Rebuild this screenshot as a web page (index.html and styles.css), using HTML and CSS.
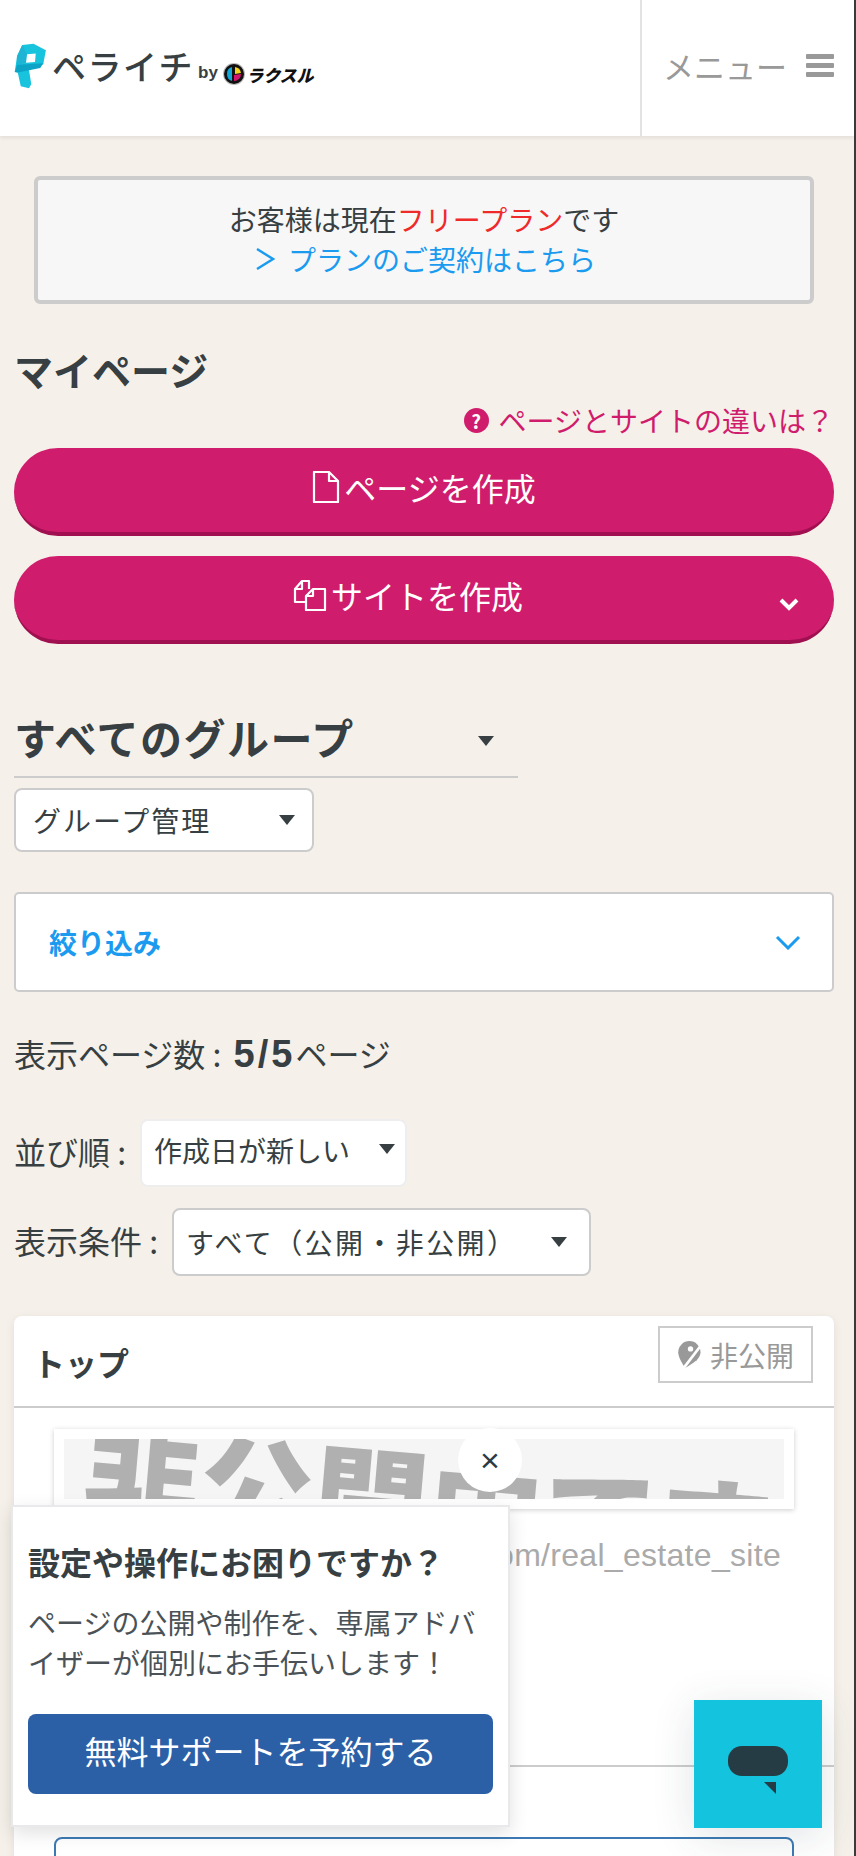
FILE: index.html
```
<!DOCTYPE html>
<html lang="ja">
<head>
    <meta charset="utf-8">
    <title>マイページ</title>
    <link rel="stylesheet" href="styles.css">
</head>
<body>
<header class="site-header">
    <div class="logo">
        <svg class="logo-mark" viewBox="20 10 88 140" width="33" height="46" preserveAspectRatio="none">
            <path fill="#17c3dd" d="M42 16 72 12l33 20-7 43-38 17 6 43-6 13-22-6-8-42-8-2 6-48z"/>
            <path fill="#0da3c6" d="M22 98 28 76l70-4-8 14-60 14z"/>
            <path fill="#20b4d4" d="M42 16l13 28-3 26-24 6 0-26z"/>
            <path fill="#fff" d="M55 44l23-2-2 26-24 2z"/>
        </svg>
        <span class="logo-name">ペライチ</span>
        <span class="logo-by">by</span>
        <svg class="logo-badge" viewBox="0 0 22 22" width="22" height="22">
            <circle cx="11" cy="11" r="11" fill="#bbb"/>
            <circle cx="11" cy="11" r="10" fill="#111"/>
            <path fill="#11a5d8" d="M4 11a7 7 0 0 1 5-7v14a7 7 0 0 1-5-7z"/>
            <path fill="#f2d21c" d="M12 4a7 7 0 0 1 6 6l-6 1z"/>
            <path fill="#d3156f" d="M11 12l7-1a7 7 0 0 1-7 7z"/>
        </svg>
        <span class="logo-rakusul">ラクスル</span>
    </div>
    <div class="menu-btn">
        <span>メニュー</span>
        <span class="burger"><i></i><i></i><i></i></span>
    </div>
</header>

<main class="page">
    <div class="plan-notice">
        <div>お客様は現在<span class="red">フリープラン</span>です</div>
        <div class="plan-link"><svg class="plan-arrow" viewBox="0 0 20 22" width="20" height="22"><path d="M2 1l16 10L2 21" fill="none" stroke="#1b9bf0" stroke-width="2.4"/></svg>プランのご契約はこちら</div>
    </div>

    <h1 class="page-title">マイページ</h1>
    <div class="help-row">
        <span class="help-icon">?</span>
        <span>ページとサイトの違いは？</span>
    </div>

    <div class="create-btn">
        <svg viewBox="0 0 28 32" width="28" height="32"><path d="M2 1h15l9 9v21H2zM17 1v9h9" fill="none" stroke="#fff" stroke-width="2.2" stroke-linejoin="round"/></svg>
        <span>ページを作成</span>
    </div>
    <div class="create-btn create-site">
        <svg viewBox="0 0 34 32" width="34" height="32"><path d="M12 23H2V10l7-8h7v8M9 2v8H2" fill="none" stroke="#fff" stroke-width="2.2" stroke-linejoin="round"/><path d="M13 31V17l7-7h12v21zM20 10v7h-7" fill="none" stroke="#fff" stroke-width="2.2" stroke-linejoin="round"/></svg>
        <span>サイトを作成</span>
        <svg class="create-chev" viewBox="0 0 20 13" width="20" height="13"><path d="M2 2l8 8 8-8" fill="none" stroke="#fff" stroke-width="4"/></svg>
    </div>

    <div class="group-select">
        <span>すべてのグループ</span>
        <i class="caret"></i>
    </div>
    <div class="select-box group-manage">
        <span>グループ管理</span>
        <i class="caret"></i>
    </div>

    <div class="filter-box">
        <span>絞り込み</span>
        <svg viewBox="0 0 26 15" width="26" height="15"><path d="M2 2l11 11L24 2" fill="none" stroke="#1b9bf0" stroke-width="3"/></svg>
    </div>

    <p class="page-count">表示ページ数 : <b>5/5</b>ページ</p>

    <div class="sort-row">
        <span class="sort-label">並び順 :</span>
        <div class="select-box sort-select">
            <span>作成日が新しい</span>
            <i class="caret"></i>
        </div>
    </div>
    <div class="sort-row cond-row">
        <span class="sort-label">表示条件 :</span>
        <div class="select-box cond-select">
            <span>すべて（公開・非公開）</span>
            <i class="caret"></i>
        </div>
    </div>

    <section class="page-card">
        <div class="card-head">
            <h2>トップ</h2>
            <div class="status-tag">
                <svg viewBox="0 0 24 26" width="27" height="29">
                    <path fill="#999" d="M11 1a10 10 0 0 1 10 10c0 5-6 10-14 14C4 20 1 15 1 11A10 10 0 0 1 11 1z"/>
                    <path d="M6 25 22 4" stroke="#fff" stroke-width="2.4"/>
                    <path d="M15 17l4-5 1 2-3 5z" fill="#999"/>
                    <circle cx="12" cy="8" r="2.4" fill="#fff"/>
                </svg>
                <span>非公開</span>
            </div>
        </div>
        <div class="card-body">
            <div class="thumb">
                <div class="thumb-inner"><span>非公開中です</span></div>
            </div>
            <div class="page-url">https://r-style.peraichi.com/real_estate_site</div>
        </div>
        <div class="card-foot">
            <div class="foot-btn"></div>
        </div>
    </section>
</main>

<div class="popup-close">×</div>
<aside class="support-popup">
    <h3>設定や操作にお困りですか？</h3>
    <p>ページの公開や制作を、専属アドバイザーが個別にお手伝いします！</p>
    <div class="support-btn">無料サポートを予約する</div>
</aside>

<div class="chat-btn">
    <svg viewBox="0 0 60 48" width="60" height="48">
        <rect width="60" height="30" rx="14" fill="#263c44"/>
        <path d="M36 36h12v12z" fill="#263c44"/>
    </svg>
</div>
</body>
</html>
```

FILE: styles.css
```
* {
    box-sizing: border-box;
}

html {
    height: 1856px;
    overflow: hidden;
    background-color: #3a3a3a;
}

body {
    margin: 0;
    width: 854px;
    height: 1856px;
    overflow: hidden;
    background-color: #f5f1ea;
    color: #373f42;
    font-family: "Noto Sans CJK JP", "Liberation Sans", sans-serif;
    font-size: 28px;
    text-spacing-trim: space-all;
    position: relative;
}

.site-header {
    height: 136px;
    background-color: #fff;
    display: flex;
    justify-content: space-between;
    box-shadow: 0 2px 4px rgba(0, 0, 0, 0.08);
}

.logo {
    display: flex;
    align-items: center;
    padding-left: 14px;
}

.logo-mark {
    margin-top: -4px;
}

.logo-name {
    font-size: 34px;
    font-weight: 500;
    margin-left: 5px;
    margin-top: -4px;
    letter-spacing: 1.5px;
    line-height: 1;
}

.logo-by {
    font-family: "Liberation Sans", sans-serif;
    font-weight: bold;
    font-size: 17px;
    margin-left: 4px;
    margin-top: 10px;
}

.logo-badge {
    margin-left: 5px;
    margin-top: 12px;
}

.logo-rakusul {
    font-weight: 900;
    font-size: 17px;
    color: #111;
    margin-left: 3px;
    margin-top: 12px;
    line-height: 1;
    transform: skewX(-14deg);
}

.menu-btn {
    width: 214px;
    border-left: 2px solid #e3e3e3;
    display: flex;
    align-items: center;
    padding-left: 21px;
    color: #999;
    font-size: 31px;
}

.menu-btn > span:first-child {
    margin-top: -6px;
}

.burger {
    display: flex;
    flex-direction: column;
    gap: 4px;
    margin-left: 19px;
    margin-top: -6px;
}

.burger i {
    display: block;
    width: 28px;
    height: 5px;
    background-color: #999;
    border-radius: 1px;
}

.page {
    padding: 40px 20px 0 14px;
}

.plan-notice {
    margin: 0 20px 0 20px;
    height: 128px;
    background-color: #f7f7f7;
    border: 4px solid #ccc;
    border-radius: 6px;
    text-align: center;
    line-height: 40px;
    padding-top: 19px;
}

.red {
    color: #ee2a2a;
}

.plan-link {
    color: #1b9bf0;
    display: flex;
    justify-content: center;
    align-items: center;
    padding-left: 3px;
}

.plan-arrow {
    margin-right: 13px;
}

.page-title {
    font-size: 39px;
    margin: 41px 0 0;
    line-height: 48px;
}

.help-row {
    display: flex;
    justify-content: flex-end;
    align-items: center;
    color: #d01c6c;
    line-height: 40px;
    margin-top: 7px;
}

.help-icon {
    width: 25px;
    height: 25px;
    border-radius: 50%;
    background-color: #d01c6c;
    color: #fff;
    font-size: 19px;
    font-weight: bold;
    line-height: 25px;
    text-align: center;
    margin-right: 10px;
}

.create-btn {
    height: 88px;
    margin-top: 8px;
    background-color: #d01c6c;
    border-bottom: 4px solid #a01050;
    border-radius: 44px;
    color: #fff;
    font-size: 32px;
    display: flex;
    justify-content: center;
    align-items: center;
    gap: 4px;
    padding-bottom: 6px;
    position: relative;
}

.create-site {
    margin-top: 20px;
    padding-right: 32px;
}

.create-chev {
    position: absolute;
    right: 35px;
    top: 42px;
}

.group-select {
    width: 504px;
    height: 93px;
    margin-top: 41px;
    border-bottom: 2px solid #ccc;
    font-size: 42px;
    font-weight: bold;
    letter-spacing: 1.5px;
    display: flex;
    justify-content: space-between;
    align-items: center;
    padding: 12px 24px 0 0;
}

.caret {
    display: block;
    width: 0;
    height: 0;
    border-left: 8px solid transparent;
    border-right: 8px solid transparent;
    border-top: 10px solid #373f42;
    flex: none;
}

.group-select .caret {
    margin-top: 8px;
}

.select-box {
    background-color: #fff;
    border: 2px solid #ccc;
    border-radius: 8px;
    display: flex;
    justify-content: space-between;
    align-items: center;
}

.group-manage {
    width: 300px;
    height: 64px;
    margin-top: 10px;
    padding: 0 17px;
    letter-spacing: 2px;
}

.filter-box {
    height: 100px;
    margin-top: 40px;
    background-color: #fff;
    border: 2px solid #ccc;
    border-radius: 5px;
    display: flex;
    justify-content: space-between;
    align-items: center;
    padding: 0 31px 0 33px;
    color: #1b9bf0;
    font-weight: bold;
}

.page-count {
    margin: 41px 0 0;
    font-size: 32px;
    line-height: 40px;
}

.page-count b {
    font-family: "Liberation Sans", sans-serif;
    font-size: 38px;
    letter-spacing: 3px;
    margin-left: 5px;
}

.sort-row {
    display: flex;
    align-items: center;
    margin-top: 45px;
    font-size: 32px;
    gap: 14px;
}

.sort-label {
    padding-bottom: 4px;
}

.sort-select {
    width: 267px;
    height: 68px;
    border-color: #eee;
    padding: 0 10px 7px 12px;
    font-size: 28px;
}

.sort-select .caret {
    margin-top: -1px;
}

.cond-row {
    margin-top: 21px;
}

.cond-select {
    width: 419px;
    height: 68px;
    padding: 0 22px 0 12px;
    font-size: 28px;
    letter-spacing: 2.4px;
}

.page-card {
    margin-top: 40px;
    background-color: #fff;
    border-radius: 8px;
    box-shadow: 0 2px 10px rgba(0, 0, 0, 0.08);
}

.card-head {
    height: 92px;
    border-bottom: 2px solid #ccc;
    display: flex;
    justify-content: space-between;
    padding: 10px 21px 0 19px;
}

.card-head h2 {
    font-size: 32px;
    margin: 12px 0 0;
    line-height: 48px;
}

.status-tag {
    width: 155px;
    height: 57px;
    border: 2px solid #ccc;
    color: #999;
    display: flex;
    align-items: center;
    justify-content: center;
    gap: 6px;
    font-size: 28px;
}

.card-body {
    height: 359px;
    border-bottom: 2px solid #ccc;
    padding: 21px 40px 0;
}

.thumb {
    height: 80px;
    background-color: #fff;
    padding: 10px;
    box-shadow: 0 1px 5px rgba(0, 0, 0, 0.2);
}

.thumb-inner {
    height: 60px;
    background-color: #f5f5f5;
    overflow: hidden;
    color: #b0b0b0;
    font-size: 115px;
    font-weight: 900;
    line-height: 1;
    white-space: nowrap;
    padding-left: 26px;
}

.thumb-inner span {
    display: block;
    width: max-content;
    transform: rotate(5deg);
    transform-origin: left top;
    margin-top: -27px;
}

.page-url {
    margin-top: 24px;
    color: #aaa;
    font-family: "Liberation Sans", sans-serif;
    font-size: 32px;
    letter-spacing: 0.3px;
    line-height: 44px;
    text-align: right;
    padding-right: 13px;
    white-space: nowrap;
}

.card-foot {
    padding: 70px 40px 0;
}

.foot-btn {
    height: 60px;
    border: 2px solid #3d7ab5;
    border-radius: 8px;
}

.popup-close {
    position: absolute;
    left: 458px;
    top: 1428px;
    width: 64px;
    height: 64px;
    border-radius: 50%;
    background-color: #fff;
    font-family: "Liberation Sans", sans-serif;
    font-size: 34px;
    line-height: 64px;
    text-align: center;
    color: #2b3a44;
}

.support-popup {
    position: absolute;
    left: 11px;
    top: 1505px;
    width: 499px;
    height: 322px;
    background-color: #fff;
    border: 2px solid #e9e9ec;
    box-shadow: 0 6px 18px rgba(0, 0, 0, 0.12);
    padding: 32px 15px 0;
}

.support-popup h3 {
    font-size: 32px;
    line-height: 44px;
    margin: 0;
}

.support-popup p {
    margin: 19px 0 0;
    font-size: 28px;
    line-height: 40px;
    color: #4a5257;
}

.support-btn {
    height: 80px;
    margin-top: 32px;
    background-color: #2b60a7;
    border-radius: 8px;
    color: #fff;
    font-size: 32px;
    line-height: 72px;
    text-align: center;
}

.chat-btn {
    position: absolute;
    left: 694px;
    top: 1700px;
    width: 128px;
    height: 128px;
    background-color: #14c4de;
    box-shadow: 0 8px 40px rgba(40, 60, 70, 0.14);
    padding: 46px 0 0 34px;
}

.chat-btn svg {
    display: block;
}
```
